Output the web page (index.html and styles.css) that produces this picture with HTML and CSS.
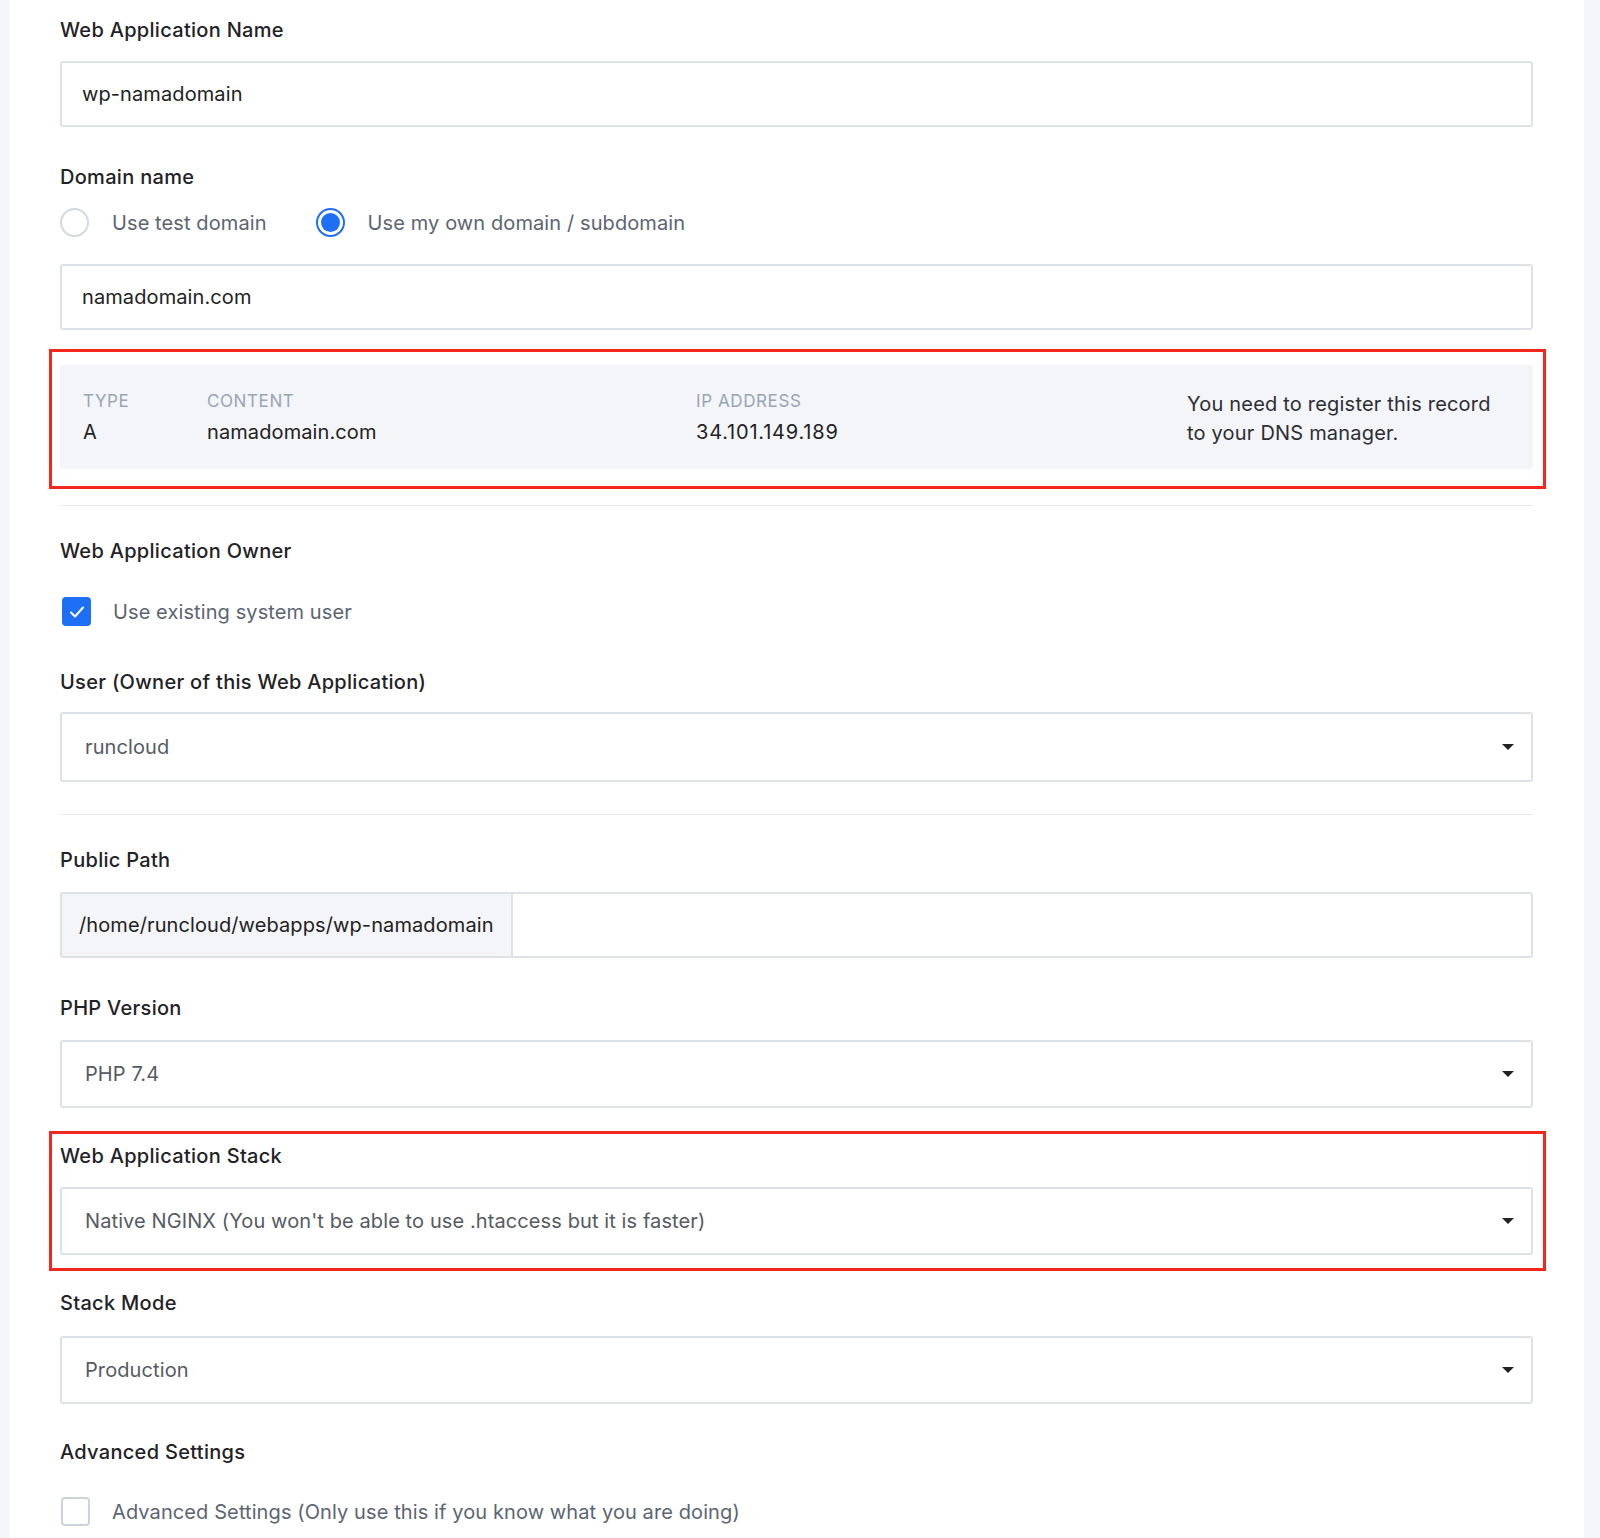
FILE: index.html
```html
<!DOCTYPE html>
<html>
<head>
    <meta name="viewport" content="width=device-width, initial-scale=1.0">
    <link rel="stylesheet" href="styles.css">
</head>
<body>
    <div class="page">
        <div class="card">
            <div class="field">
                <div class="label">Web Application Name</div>
                <div class="input">wp-namadomain</div>
            </div>

            <div class="field domain-field">
                <div class="label">Domain name</div>
                <div class="radios">
                    <div class="radio-item">
                        <span class="radio"></span>
                        <span class="option">Use test domain</span>
                    </div>
                    <div class="radio-item">
                        <span class="radio checked"></span>
                        <span class="option">Use my own domain / subdomain</span>
                    </div>
                </div>
                <div class="input domain-input">namadomain.com</div>
            </div>

            <div class="mark dns-mark">
                <div class="dns">
                    <div class="dns-col">
                        <div class="dns-head">Type</div>
                        <div class="dns-val">A</div>
                    </div>
                    <div class="dns-col">
                        <div class="dns-head">Content</div>
                        <div class="dns-val">namadomain.com</div>
                    </div>
                    <div class="dns-col">
                        <div class="dns-head">IP Address</div>
                        <div class="dns-val ip">34.101.149.189</div>
                    </div>
                    <div class="dns-note">You need to register this record<br>to your DNS manager.</div>
                </div>
            </div>

            <hr class="divider first-divider">

            <div class="field owner">
                <div class="label">Web Application Owner</div>
                <div class="check-row">
                    <span class="checkbox checked">
                        <svg width="18" height="14" viewBox="0 0 18 14"><path d="M3 7.5l4 4 8-9" fill="none" stroke="#fff" stroke-width="2" stroke-linecap="round" stroke-linejoin="round"/></svg>
                    </span>
                    <span class="option">Use existing system user</span>
                </div>
            </div>

            <div class="field user-field">
                <div class="label">User (Owner of this Web Application)</div>
                <div class="select">
                    <span>runcloud</span>
                    <svg class="caret" width="12" height="6" viewBox="0 0 12 6"><path d="M0 0h12L6 6z" fill="#222"/></svg>
                </div>
            </div>

            <hr class="divider">

            <div class="field path-field">
                <div class="label">Public Path</div>
                <div class="input-group">
                    <div class="addon">/home/runcloud/webapps/wp-namadomain</div>
                    <div class="group-rest"></div>
                </div>
            </div>

            <div class="field php-field">
                <div class="label">PHP Version</div>
                <div class="select">
                    <span>PHP 7.4</span>
                    <svg class="caret" width="12" height="6" viewBox="0 0 12 6"><path d="M0 0h12L6 6z" fill="#222"/></svg>
                </div>
            </div>

            <div class="mark stack-mark">
                <div class="label">Web Application Stack</div>
                <div class="select">
                    <span>Native NGINX (You won't be able to use .htaccess but it is faster)</span>
                    <svg class="caret" width="12" height="6" viewBox="0 0 12 6"><path d="M0 0h12L6 6z" fill="#222"/></svg>
                </div>
            </div>

            <div class="field stack-mode">
                <div class="label">Stack Mode</div>
                <div class="select">
                    <span>Production</span>
                    <svg class="caret" width="12" height="6" viewBox="0 0 12 6"><path d="M0 0h12L6 6z" fill="#222"/></svg>
                </div>
            </div>

            <div class="field advanced-field">
                <div class="label">Advanced Settings</div>
                <div class="check-row advanced-row">
                    <span class="checkbox"></span>
                    <span class="option">Advanced Settings (Only use this if you know what you are doing)</span>
                </div>
            </div>
        </div>
    </div>
</body>
</html>
```

FILE: styles.css
```css
body {
    margin: 0;
    background: #f4f5f9;
    font-family: Inter, "Noto Sans", sans-serif;
    font-size: 20px;
    letter-spacing: 0.1px;
    color: #222;
}
.page {
    padding: 0 16px 0 9px;
}
.card {
    background: #fff;
    padding: 18px 51px 20px;
    min-height: 1538px;
    box-sizing: border-box;
}
.label {
    font-size: 20px;
    line-height: 24px;
    font-weight: 500;
    letter-spacing: 0.3px;
    color: #1f2226;
    margin-bottom: 19px;
}
.input,
.select {
    box-sizing: border-box;
    border: 2px solid #dde2e8;
    border-radius: 3px;
    display: flex;
    align-items: center;
    background: #fff;
}
.input {
    height: 66px;
    padding-left: 20px;
    color: #222;
}
.select {
    height: 68px;
    padding: 0 17px 0 23px;
    justify-content: space-between;
    color: #555b62;
}
.domain-field {
    margin-top: 38px;
}
.radios {
    display: flex;
    align-items: center;
    height: 29px;
}
.radio-item {
    display: flex;
    align-items: center;
    margin-right: 49px;
}
.radio {
    width: 29px;
    height: 29px;
    box-sizing: border-box;
    border: 2px solid #d3d9e0;
    border-radius: 50%;
    margin-right: 23px;
}
.radio.checked {
    border-color: #1f6ff5;
    padding: 3px;
}
.radio.checked::after {
    content: "";
    display: block;
    width: 100%;
    height: 100%;
    border-radius: 50%;
    background: #1f6ff5;
}
.option {
    color: #5b6572;
}
.domain-input {
    margin-top: 27px;
}
.mark {
    border: 3px solid #f3281c;
    margin: 0 -13px 0 -11px;
}
.dns-mark {
    margin-top: 19px;
    padding: 13px 10px 17px 8px;
}
.dns {
    background: #f4f5f9;
    border-radius: 3px;
    display: grid;
    grid-template-columns: 124px 489px 491px 1fr;
    align-items: center;
    height: 104px;
    padding-left: 23px;
    box-sizing: border-box;
}
.dns-head {
    font-size: 17px;
    line-height: 20px;
    text-transform: uppercase;
    letter-spacing: 0.6px;
    color: #97a6b4;
    margin-bottom: 9px;
}
.dns-val {
    line-height: 24px;
    color: #222;
}
.dns-val.ip {
    letter-spacing: 0.8px;
}
.dns-note {
    line-height: 29px;
    letter-spacing: 0.2px;
    padding-top: 3px;
    color: #2b2e33;
}
.divider {
    border: none;
    border-top: 1px solid #e6e9ed;
    margin: 32px 0 0;
}
.first-divider {
    margin-top: 16px;
}
.owner {
    margin-top: 33px;
}
.check-row {
    display: flex;
    align-items: center;
    margin-top: 34px;
}
.checkbox {
    width: 29px;
    height: 29px;
    box-sizing: border-box;
    border: 2px solid #ccd3db;
    border-radius: 4px;
    margin: 0 22px 0 2px;
    display: flex;
    align-items: center;
    justify-content: center;
}
.checkbox.checked {
    background: #1f6ff5;
    border-color: #1f6ff5;
}
.user-field {
    margin-top: 44px;
}
.user-field .label {
    margin-bottom: 18px;
}
.user-field .select {
    height: 70px;
}
.path-field {
    margin-top: 33px;
}
.path-field .label,
.php-field .label {
    margin-bottom: 20px;
}
.input-group {
    display: flex;
    height: 66px;
    border: 2px solid #dde2e8;
    border-radius: 3px;
    box-sizing: border-box;
}
.addon {
    background: #f4f5f9;
    border-right: 2px solid #dde2e8;
    padding: 0 17px;
    display: flex;
    align-items: center;
    color: #222;
}
.group-rest {
    flex: 1;
}
.php-field {
    margin-top: 38px;
}
.stack-mark {
    margin-top: 23px;
    padding: 10px 10px 13px 8px;
}
.stack-mode {
    margin-top: 20px;
}
.stack-mode .label {
    margin-bottom: 21px;
}
.advanced-field {
    margin-top: 36px;
}
.advanced-row {
    margin-top: 33px;
}
.advanced-row .checkbox {
    margin-left: 1px;
}
```
